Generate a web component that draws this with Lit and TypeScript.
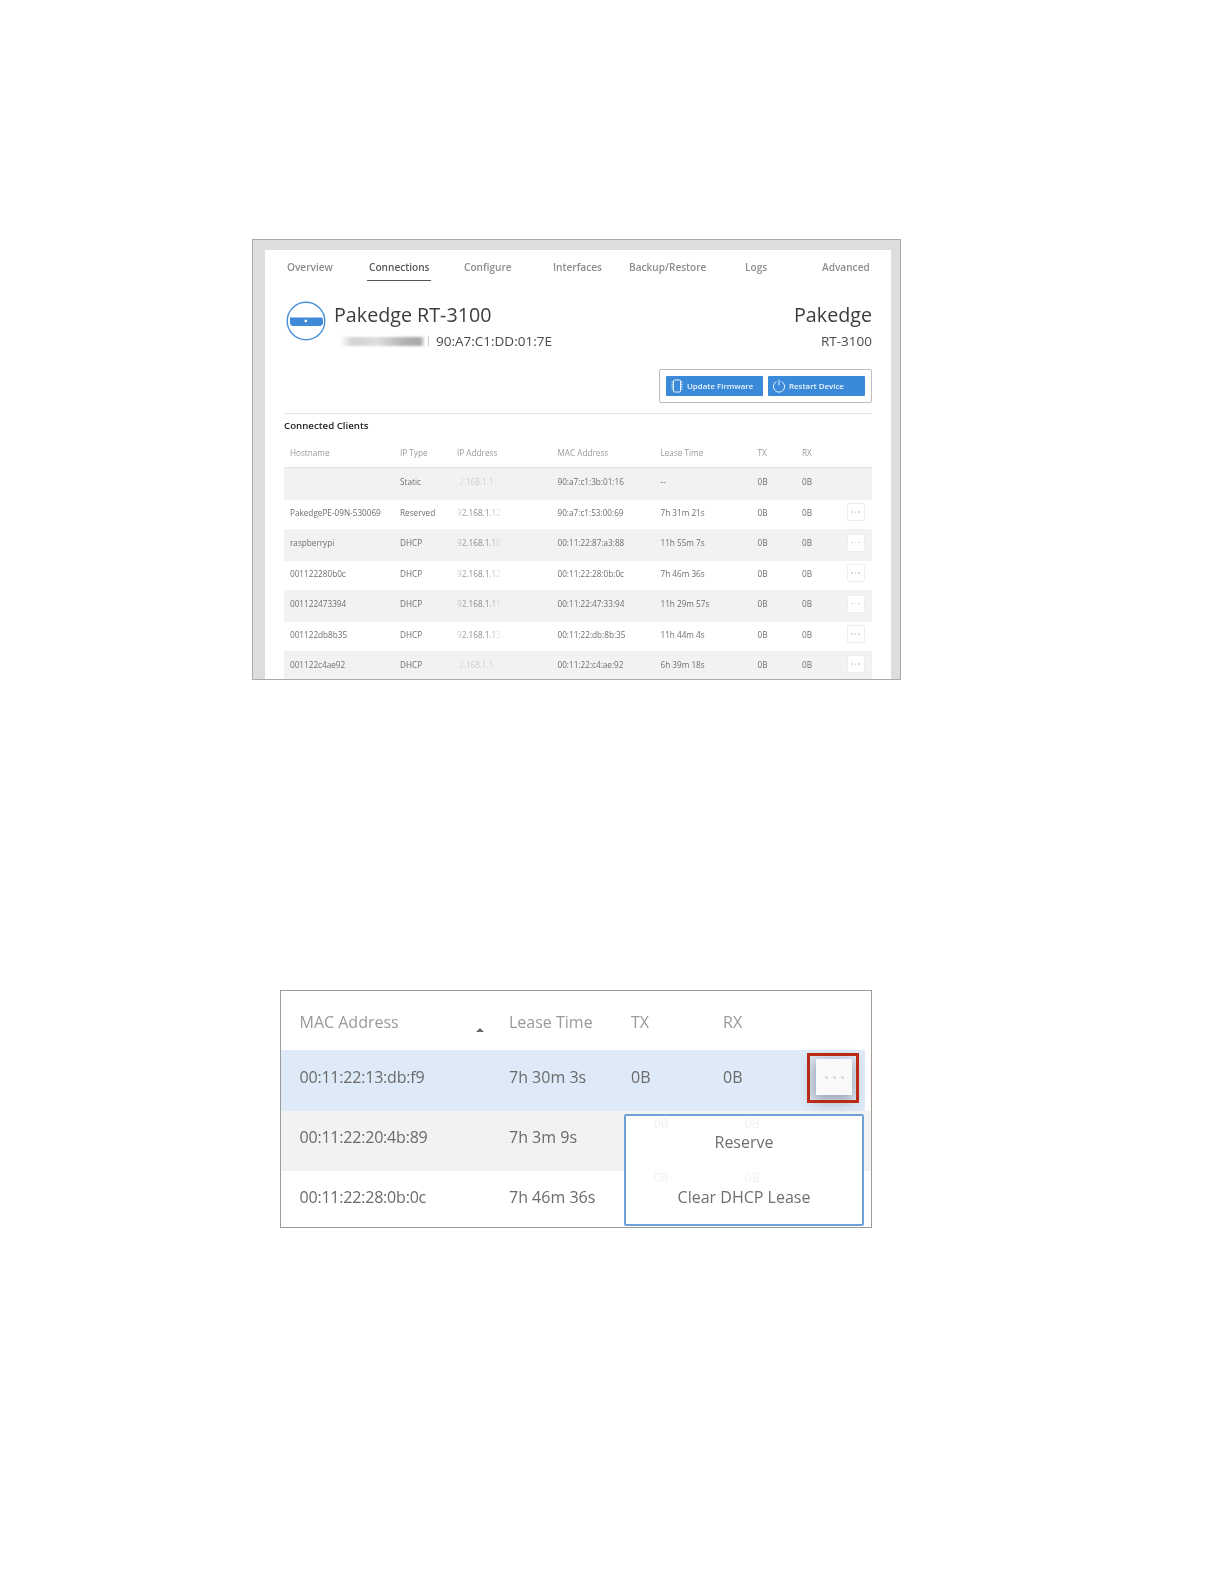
import { LitElement, html, css } from "lit";
import { customElement } from "lit/decorators.js";

const rows = [
  ["", "Static", "2.168.1.1", "90:a7:c1:3b:01:16", "--", false, "faint"],
  ["PakedgePE-09N-530069", "Reserved", "92.168.1.12", "90:a7:c1:53:00:69", "7h 31m 21s", true, ""],
  ["raspberrypi", "DHCP", "92.168.1.10", "00:11:22:87:a3:88", "11h 55m 7s", true, ""],
  ["001122280b0c", "DHCP", "92.168.1.12", "00:11:22:28:0b:0c", "7h 46m 36s", true, ""],
  ["001122473394", "DHCP", "92.168.1.11", "00:11:22:47:33:94", "11h 29m 57s", true, ""],
  ["001122db8b35", "DHCP", "92.168.1.13", "00:11:22:db:8b:35", "11h 44m 4s", true, ""],
  ["001122c4ae92", "DHCP", "2.168.1.1", "00:11:22:c4:ae:92", "6h 39m 18s", true, "faint"],
] as const;

const tabs = ["Overview", "Connections", "Configure", "Interfaces", "Backup/Restore", "Logs", "Advanced"];

@customElement("app-root")
export class AppRoot extends LitElement {
  static styles = css`
    :host {
      display: block;
      height: 1584px;
      box-sizing: border-box;
      padding-top: 239px;
      background: #fff;
      font-family: "Open Sans", sans-serif;
      overflow: hidden;
    }
    .shot {
      margin-left: 252px;
      width: 649px;
      height: 441px;
      box-sizing: border-box;
      border: 1px solid #a9abab;
      background: #dcdddd;
      padding: 10px 9px 0 12px;
      overflow: hidden;
    }
    .panel {
      background: #fff;
      height: 100%;
      overflow: hidden;
      filter: blur(0.4px);
    }
    .tabs {
      display: grid;
      grid-template-columns: 82px 95px 89px 76px 116px 77px auto;
      padding: 10px 0 0 22px;
      height: 20px;
      font-size: 10.1px;
      line-height: 14px;
      color: #8c8c8c;
      font-weight: 600;
    }
    .tab { position: relative; white-space: nowrap; }
    .tab.on { color: #5a5a5a; }
    .tab.on::after {
      content: "";
      position: absolute;
      left: -2px;
      width: 64px;
      top: 20px;
      height: 1px;
      background: #555;
    }
    .head {
      display: flex;
      justify-content: space-between;
      padding: 21px 27px 0 21px;
      margin-right: -8px;
    }
    .id { display: flex; gap: 8px; }
    .logo { width: 40px; height: 40px; display: block; }
    .title { font-size: 19.7px; line-height: 26px; color: #3c3c3c; margin-top: 1px; }
    .sub { display: flex; align-items: center; font-size: 13.5px; color: #4a4a4a; line-height: 18px; margin-top: 4px; }
    .smear {
      width: 84px;
      height: 9px;
      margin-left: 6px;
      background: linear-gradient(90deg, #fff, #d2d2d2 15%, #dedede 45%, #b4b4b4 75%, #a8a8a8 95%, #ddd);
      filter: blur(1.3px);
    }
    .bar { width: 1px; height: 10px; background: #ccc; margin: 0 7px 0 4px; }
    .brand { text-align: right; margin-top: 1px; }
    .brand .b1 { font-size: 19.7px; line-height: 26px; color: #3c3c3c; }
    .brand .b2 { font-size: 13.5px; line-height: 18px; color: #4a4a4a; margin-top: 4px; }
    .actions {
      margin: 19px 19px 0 auto;
      width: 213px;
      height: 34px;
      box-sizing: border-box;
      border: 1px solid #bdbdbd;
      border-radius: 2px;
      display: flex;
      gap: 5px;
      padding: 6px;
    }
    .btn {
      flex: 1;
      background: #3b8ad9;
      color: #e9f2fb;
      display: flex;
      align-items: center;
      font-size: 7.9px;
      font-weight: 600;
      gap: 3px;
      padding-left: 4px;
      border-radius: 1px;
      white-space: nowrap;
    }
    .btn svg { width: 14px; height: 14px; flex: none; }
    .rule { height: 1px; background: #e4e4e4; margin: 10px 19px 0; }
    .cc { font-size: 9.7px; font-weight: 600; color: #222; margin: 5px 19px 0; line-height: 14px; }
    .table { margin: 8px 19px 0; }
    .tr {
      display: grid;
      grid-template-columns: 6px 110px 57px 100.5px 103px 97px 44.5px 44.5px 18px;
      align-items: center;
      font-size: 8.2px;
      color: #6f6f6f;
      white-space: nowrap;
      box-sizing: border-box;
      padding-bottom: 5px;
    }
    .tr.th { height: 27px; color: #9a9a9a; border-bottom: 1px solid #e2e2e2; padding-bottom: 3px; }
    .tr.row { height: 29px; }
    .tr.row:nth-child(even) { height: 32px; background: #f2f2f2; }
    .tr.row:nth-child(8) { height: 31px; }
    .c1 { grid-column: 2; }
    .ip {
      color: #8a8a8a;
      -webkit-mask-image: linear-gradient(90deg, rgba(0,0,0,.25), #000 20%, #000 65%, rgba(0,0,0,.1) 95%);
      mask-image: linear-gradient(90deg, rgba(0,0,0,.25), #000 20%, #000 65%, rgba(0,0,0,.1) 95%);
      width: 46px;
      overflow: hidden;
    }
    .ip.faint { opacity: .35; padding-left: 2px; }
    .dots {
      width: 18px;
      height: 18px;
      box-sizing: border-box;
      background: #fff;
      border: 1px solid #eeeeee;
      border-radius: 2px;
      display: flex;
      align-items: center;
      justify-content: center;
      gap: 2px;
    }
    .dots i { width: 1.5px; height: 1.5px; background: #d4d4d4; border-radius: 50%; }

    .shot2 {
      position: relative;
      margin: 310px 0 0 280px;
      width: 592px;
      height: 238px;
      box-sizing: border-box;
      border: 1px solid #9c9c9c;
      background: #fff;
      filter: blur(0.45px);
      font-size: 16px;
      color: #6a6a6a;
      overflow: hidden;
    }
    .r2 {
      display: grid;
      grid-template-columns: 18.5px 209.5px 122px 92px 1fr;
      align-items: center;
      white-space: nowrap;
      box-sizing: border-box;
    }
    .r2.h { height: 59px; color: #9a9a9a; padding-top: 3px; }
    .r2.a { height: 61px; background: #deeaf7; margin-right: 6px; padding-bottom: 7px; }
    .r2.b { height: 60px; background: #f2f2f2; padding-bottom: 8px; }
    .r2.c { height: 56px; padding-bottom: 4px; }
    .mac { letter-spacing: -0.2px; }
    .sort {
      position: absolute;
      left: 195px;
      top: 37px;
      width: 0;
      height: 0;
      border-left: 4.5px solid transparent;
      border-right: 4.5px solid transparent;
      border-bottom: 4px solid #6a6a6a;
    }
    .more {
      position: absolute;
      left: 535px;
      top: 68px;
      width: 36px;
      height: 36px;
      background: #f9f9f9;
      box-shadow: -1px 4px 14px 2px rgba(70, 80, 100, .45);
      display: flex;
      align-items: center;
      justify-content: center;
      gap: 5px;
    }
    .more i { width: 3px; height: 3px; border-radius: 50%; background: #d8d8d8; }
    .mark {
      position: absolute;
      left: 526px;
      top: 62px;
      width: 52px;
      height: 50px;
      box-sizing: border-box;
      border: 3px solid #b92b12;
    }
    .menu {
      position: absolute;
      left: 343px;
      top: 123px;
      width: 240px;
      height: 112px;
      box-sizing: border-box;
      border: 2px solid #6fa3d8;
      border-radius: 2px;
      background: #fff;
      text-align: center;
      font-size: 16px;
      line-height: 22px;
      color: #6f6f6f;
      padding-top: 15px;
      overflow: hidden;
    }
    .menu div + div { margin-top: 33px; }
    .ghost { position: absolute; color: #f1f1f1; font-size: 12px; line-height: 10px; }
    .g1 { left: 28px; top: 3px; }
    .g2 { left: 119px; top: 3px; }
    .g3 { left: 28px; top: 57px; }
    .g4 { left: 119px; top: 57px; }
  `;

  render() {
    return html`
      <div class="shot">
        <div class="panel">
          <div class="tabs">
            ${tabs.map((t) => html`<div class="tab ${t === "Connections" ? "on" : ""}">${t}</div>`)}
          </div>
          <div class="head">
            <div class="id">
              <svg class="logo" viewBox="0 0 40 40">
                <circle cx="20" cy="20" r="18.8" fill="#fff" stroke="#4a90d9" stroke-width="1.4" />
                <path d="M4 16.5h32l1 2v4l-2 2.5H6l-2-2.5z" fill="#3f8ad8" />
                <rect x="18.6" y="18.7" width="2.4" height="2.4" fill="#fff" />
              </svg>
              <div>
                <div class="title">Pakedge RT-3100</div>
                <div class="sub"><span class="smear"></span><span class="bar"></span>90:A7:C1:DD:01:7E</div>
              </div>
            </div>
            <div class="brand">
              <div class="b1">Pakedge</div>
              <div class="b2">RT-3100</div>
            </div>
          </div>
          <div class="actions">
            <div class="btn">
              <svg viewBox="0 0 14 14" fill="none" stroke="#e9f2fb">
                <rect x="3.5" y="1" width="7" height="12" rx="1" />
                <path d="M1.5 3h2M1.5 5.3h2M1.5 7.6h2M1.5 10h2M10.5 3h2M10.5 5.3h2M10.5 7.6h2M10.5 10h2" />
              </svg>
              Update Firmware
            </div>
            <div class="btn">
              <svg viewBox="0 0 14 14" fill="none" stroke="#e9f2fb">
                <path d="M4.4 2.6a5.6 5.6 0 1 0 5.2 0" />
                <path d="M7 .8v5.5" />
              </svg>
              Restart Device
            </div>
          </div>
          <div class="rule"></div>
          <div class="cc">Connected Clients</div>
          <div class="table">
            <div class="tr th">
              <span class="c1">Hostname</span><span>IP Type</span><span>IP Address</span><span>MAC Address</span>
              <span>Lease Time</span><span>TX</span><span>RX</span>
            </div>
            ${rows.map(
              (r) => html`<div class="tr row">
                <span class="c1">${r[0]}</span><span>${r[1]}</span>
                <span class="ip ${r[6]}">${r[2]}</span><span>${r[3]}</span><span>${r[4]}</span>
                <span>0B</span><span>0B</span>
                ${r[5] ? html`<span class="dots"><i></i><i></i><i></i></span>` : html`<span></span>`}
              </div>`
            )}
          </div>
        </div>
      </div>

      <div class="shot2">
        <div class="r2 h"><span class="c1">MAC Address</span><span>Lease Time</span><span>TX</span><span>RX</span></div>
        <div class="r2 a"><span class="c1 mac">00:11:22:13:db:f9</span><span>7h 30m 3s</span><span>0B</span><span>0B</span></div>
        <div class="r2 b"><span class="c1 mac">00:11:22:20:4b:89</span><span>7h 3m 9s</span></div>
        <div class="r2 c"><span class="c1 mac">00:11:22:28:0b:0c</span><span>7h 46m 36s</span></div>
        <div class="sort"></div>
        <div class="more"><i></i><i></i><i></i></div>
        <div class="mark"></div>
        <div class="menu">
          <span class="ghost g1">0B</span><span class="ghost g2">0B</span>
          <span class="ghost g3">0B</span><span class="ghost g4">0B</span>
          <div>Reserve</div><div>Clear DHCP Lease</div>
        </div>
      </div>
    `;
  }
}
